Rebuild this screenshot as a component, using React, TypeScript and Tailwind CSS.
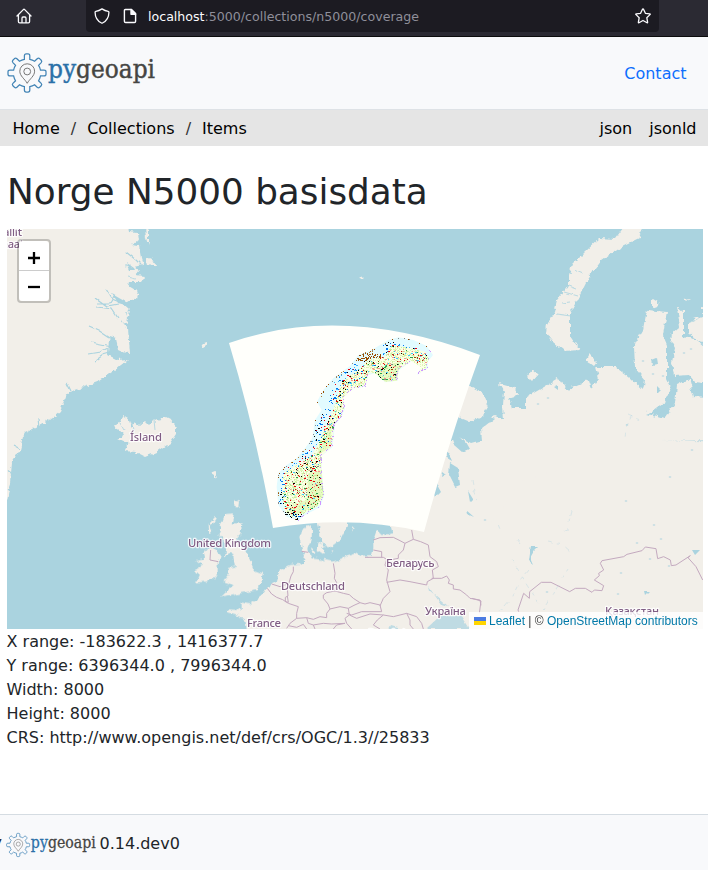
import React from "react";

type Point = [number, number];

// Outline of the Norwegian sea buffer, in thirds of a pixel from (225, 310).
const BUFFER: Point[] = [
  [160, 490], [185, 465], [215, 445], [240, 415], [262, 385], [270, 330], [290, 300], [276, 275], [295, 240], [325, 205],
  [375, 168], [400, 135], [440, 120], [490, 90], [520, 82], [565, 90], [605, 108], [624, 135], [608, 155],
  [608, 175], [575, 195], [590, 172], [560, 152], [520, 182], [518, 212], [480, 217], [450, 190], [430, 195],
  [422, 230], [385, 235], [355, 262], [360, 295], [350, 320], [330, 345], [322, 412], [290, 437], [292, 515],
  [298, 555], [285, 592], [240, 615], [220, 632], [185, 620], [160, 585], [155, 530],
];
const LAND: Point[] = [
  [175, 490], [210, 468], [262, 435], [285, 390], [300, 350], [325, 300], [340, 250], [350, 215], [400, 180],
  [430, 150], [480, 140], [500, 105], [530, 110], [560, 115], [600, 125], [612, 145], [600, 180], [578, 192],
  [588, 172], [557, 152], [520, 180], [516, 212], [480, 215], [450, 190], [430, 190], [422, 228], [385, 235],
  [357, 262], [358, 295], [348, 320], [328, 345], [320, 410], [290, 437], [290, 515], [296, 555],
  [283, 585], [240, 610], [210, 625], [180, 605], [172, 560],
];

const inside = (x: number, y: number, poly: Point[]) => {
  let hit = false;
  for (let i = 0, j = poly.length - 1; i < poly.length; j = i++) {
    const [xi, yi] = poly[i];
    const [xj, yj] = poly[j];
    if (yi > y !== yj > y && x < ((xj - xi) * (y - yi)) / (yj - yi) + xi) hit = !hit;
  }
  return hit;
};

const buildDots = () => {
  let seed = 48271;
  const rnd = () => {
    seed = (seed * 16807) % 2147483647;
    return seed / 2147483647;
  };
  const paths: Record<string, string> = {};
  const put = (color: string, x: number, y: number, w = 1) => {
    paths[color] = (paths[color] || "") + `M${x} ${y}h${w}v1h-${w}z`;
  };
  const pick = (list: string[]) => list[Math.floor(rnd() * list.length)];
  const inner = ["#000", "#e8000b", "#e8000b", "#2ca04a", "#2ca04a", "#f49a8c", "#f49a8c", "#994c00", "#e8000b", "#888", "#3cc8ff"];
  const coast = ["#0078f0", "#0078f0", "#3cb8ff", "#0078f0", "#e8000b", "#000"];
  for (let y = 336; y < 523; y++) {
    for (let x = 275; x < 434; x++) {
      const px = (x + 0.5 - 225) * 3;
      const py = (y + 0.5 - 310) * 3;
      if (!inside(px, py, BUFFER)) continue;
      const r = rnd();
      const edge = !inside(px - 4, py - 4, BUFFER) || !inside(px - 4, py, BUFFER);
      const east = !inside(px + 5, py + 3, BUFFER);
      const south = py > 605;
      const w = rnd() < 0.25 ? 2 : 1;
      if (inside(px, py, LAND)) {
        const nearCoast = !inside(px - 22, py - 16, LAND);
        if (south && r < 0.25) put(pick(["#000", "#000", "#0078f0", "#e8000b"]), x, y, w);
        else if (east && r < 0.28) put("#cc99ff", x, y);
        else if (r < 0.145) put(nearCoast ? pick([...coast, ...inner]) : pick(inner), x, y, w);
        else if (r < 0.38) put("#dff7b8", x, y);
        else if (r < 0.46) put("#c8efa0", x, y);
      } else if (edge && r < 0.11) put(pick(["#bb8038", "#888", "#994c00"]), x, y);
      else if (east && r < 0.25) put("#cc99ff", x, y);
      else if (south && r < 0.25) put("#000", x, y, w);
      else if (px > 395 && px < 470 && py > 130 && py < 153 && r < 0.36) put("#994c00", x, y);
      else if (inside(px + 20, py + 12, LAND) && r < 0.11) put(pick(coast), x, y, w);
    }
  }
  return Object.entries(paths);
};
const DOTS = buildDots();
const pts = (p: Point[]) => p.map((q) => q.join(",")).join(" ");

const PygeoapiLogo = ({ className }: { className: string }) => (
  <svg viewBox="0 0 150 42" className={className}>
    <path
      d="M17.4 6.8V3.2Q17.4 1.2 19.2 1.2H21Q22.8 1.2 22.8 3.2V6.8Q25.5 7.4 27.6 8.7L30.2 6.1Q31.4 5 32.6 6L34.2 7.6Q35.3 8.8 34.2 10L31.6 12.7Q33 14.8 33.5 17.5H37Q39 17.5 39 19.2V21.6Q39 23.3 37 23.3H33.5Q32.9 26 31.6 28.2L34.2 30.8Q35.3 32 34.2 33.2L32.6 34.7Q31.4 35.7 30.2 34.6L27.6 32.1Q25.4 33.5 22.8 34V37.5Q22.8 39.5 21 39.5H19.2Q17.4 39.5 17.4 37.5V34Q14.7 33.5 12.5 32.1L9.9 34.6Q8.7 35.7 7.5 34.7L5.9 33.2Q4.8 32 5.9 30.8L8.5 28.2Q7.2 26 6.6 23.3H3Q1 23.3 1 21.6V19.2Q1 17.5 3 17.5H6.6Q7.1 14.8 8.5 12.7L5.9 10Q4.8 8.8 5.9 7.6L7.5 6Q8.7 5 9.9 6.1L12.5 8.7Q14.7 7.4 17.4 6.8Z"
      fill="none" stroke="#4385b6" strokeWidth="1.25" transform="translate(0 .6)"
    />
    <path d="M20.2 31.3C17.8 27 12.8 24 12.8 19.2A7.4 7.4 0 0 1 27.6 19.2C27.6 24 22.6 27 20.2 31.3Z" fill="none" stroke="#777" strokeWidth="1" />
    <circle cx="20.2" cy="19.5" r="3.4" fill="none" stroke="#777" strokeWidth="1" />
    <text x="41" y="26.2" textLength="107" lengthAdjust="spacingAndGlyphs" fontSize="26" strokeWidth=".45" className="font-['DejaVu_Serif',serif]">
      <tspan fill="#2b70a8" stroke="#2b70a8">py</tspan><tspan fill="#454543" stroke="#454543">geoapi</tspan>
    </text>
  </svg>
);

const Label = ({ x, y, w, children }: { x: number; y: number; w: number; children: string }) => (
  <text
    x={x} y={y} textLength={w} fontSize="11.3" fill="#805d84" stroke="#fff" strokeOpacity=".8" strokeWidth="2.4" strokeLinejoin="round"
    className="font-['Noto_Sans',sans-serif] font-medium [paint-order:stroke]"
  >
    {children}
  </text>
);

const MapDrawing = () => (
  <svg viewBox="7 229 696 400" className="block h-full w-full">
    <defs>
      <filter id="coast" filterUnits="userSpaceOnUse" x="-10" y="210" width="740" height="440">
        <feTurbulence type="fractalNoise" baseFrequency=".17" numOctaves="3" seed="7" />
        <feDisplacementMap in="SourceGraphic" scale="6" xChannelSelector="R" yChannelSelector="G" />
      </filter>
      <filter id="river" filterUnits="userSpaceOnUse" x="-10" y="210" width="740" height="440">
        <feTurbulence type="fractalNoise" baseFrequency=".12" numOctaves="2" seed="3" />
        <feDisplacementMap in="SourceGraphic" scale="4" xChannelSelector="R" yChannelSelector="G" />
      </filter>
    </defs>
    <rect x="7" y="229" width="696" height="400" fill="#aad3df" />
    <g fill="#f2efe9" filter="url(#coast)">
      {/* Greenland */}
      <path d="M-5 215H128L130 232 138 233 139 241 132 245 139 246 141 258 143 264 135 266 140 270 136 275 145 276 141 282 129 282 128 285 138 291 136 298 128 303 120 301 129 309 127 324 121 320 128 329 130 353 118 352 113 340 109 339 108 355 118 360 128 359 113 372 100 381 87 386 71 391 65 398 60 412 50 420 37 427 25 433 23 437 20 450 12 463 10 483 7 500H-5Z" />
      <path d="M145 229 148 231 148 245 146 238ZM146 258 151 257 155 265 147 266Z" />
      {/* Iceland */}
      <path d="M115 428 123 416 128 419 131 427 135 422 139 425 144 421 148 425 154 419 158 421 162 416 170 420 176 428 176 434 170 443 157 452 145 457 135 452 124 451 128 443 117 438 125 434Z" />
      <path d="M201 344 207 342 208 344 203 347ZM211 472 216 470 216 475 214 480 214 474Z" />
      {/* British Isles */}
      <g transform="translate(180 510) scale(.33333)">
        <path d="M135 12 162 10 155 40 188 40 180 75 165 95 190 110 210 150 222 180 248 190 245 215 230 240 180 250 150 258 122 262 150 235 160 225 130 215 150 190 140 175 165 170 160 135 145 130 135 145 140 100 115 75 125 40ZM107 15 90 35 95 45 107 25ZM85 40 94 60 88 68ZM70 120 100 116 122 135 113 160 113 195 80 215 45 218 60 195 45 180 70 165 48 150 75 145Z" />
        <path d="M163-30 180-25 178-10 163-12Z" />
        {/* Mainland Europe */}
        <path d="M205 390 195 325 145 310 140 298 185 300 185 275 215 280 240 262 255 238 290 215 300 180 330 165 370 160 375 140 365 115 358 80 380 45 396 55 395 90 385 115 395 145 430 150 460 155 500 140 530 130 545 140 575 138 580 115 580 90 590 60 605 75 640 70 630 30 750-30 830-150 900-230 1800-200V390Z" />
        <path d="M405 20 430 110 450 112 480 90 500 50 510 20ZM392 112 410 125 400 132ZM415 98 435 103 430 132 413 120ZM520 50 525 48 515 70ZM454 118 460 119 459 124Z" />
      </g>
      {/* Arctic Russia */}
      <path d="M457 390 468 385 482 392 488 407 482 417 470 421 457 417 440 430 420 530 485 530 540 460 590 440 720 440 720 399 694 397 689 379 677 385 675 403 664 419 647 414 652 412 665 402 671 387 667 378 667 345 663 335 667 312 647 310 643 330 634 345 635 368 645 380 643 390 629 377 615 367 596 367 599 378 592 388 589 380 579 385 567 390 559 378 544 387 525 398 525 408 512 408 509 398 519 395 514 387 499 383 504 392 503 405 504 420 494 416 479 428 482 442 470 442 458 435 440 450Z" />
      <path d="M470 441 480 428 490 420 540 420 560 470 450 500 455 440Z" />
      <path d="M629 220H645L639 238 619 248 602 260 589 277 580 295 570 313 570 335 580 350 564 351 554 343 546 333 547 325 554 312 557 300 569 285 569 275 572 265 585 252 600 238 615 239Z" />
      <path d="M532 370 538 375 532 382 527 377ZM589 354 597 362 594 366 586 360ZM652 299 660 304 652 307ZM720 385 695 382 689 375 674 376 672 362 675 348 669 337 680 327 677 307 683 312 683 337 720 346ZM720 320 707 316 689 323 689 333 705 347 720 346ZM693 318 699 316 697 321ZM684 300 690 299 686 302ZM702 308 712 310 702 314Z" />
      <circle cx="361" cy="278" r="1.5" />
    </g>
    {/* Fjords, White Sea and lakes */}
    <g fill="#aad3df" filter="url(#river)">
      <path d="M457 417 472 423 488 415 495 418 481 429 482 440 471 443 456 435 451 432Z" />
      <path d="M450 434 457 433 465 442 469 449 462 452 454 445ZM444 449 449 453 452 461 447 458ZM450 463 458 468 460 485 455 487 449 475ZM436 483 441 492 435 498 431 489ZM468 490 473 498 470 501ZM466 510 474 517 467 514ZM443 471 447 474 442 477Z" />
      <path d="M652 360 657 358 658 364 653 365ZM657 386 661 390 657 394ZM530 546 539 546 534 551 530 558 533 565 528 561ZM645 592 650 592 646 596ZM692 550 700 550 695 555ZM553 386 557 384 557 389Z" />
      <path d="M428 586 441 604 448 606 429 590ZM426 629 440 616 461 616 469 629ZM391 625 398 627 398 630 389 629Z" fillOpacity=".7" />
      <path d="M127 263 134 268 135 270 130 270ZM127 283 135 287 131 288ZM112 293 126 301 129 306 118 303ZM110 336 116 338 118 350 129 355 128 358 112 354Z" />
    </g>
    <g fill="none" stroke="#aad3df" strokeWidth="1.2" filter="url(#river)">
      <path d="M96 298 107 306 118 304M106 289 112 299 127 305M97 307 112 309 118 318M98 303 110 303 114 296M89 326 98 330 110 338M91 342 111 346M88 354 100 352 108 348M95 361 103 355 110 353M126 252 136 260 140 264M66 383 70 391M38 419 39 429M13 445 22 450M8 470 14 474" />
      <path d="M125 266 131 265M128 276 136 278M126 311 128 319M562 303 570 302M564 292 578 296M568 286 576 289M574 269 583 273M556 314 571 316M120 423 124 430M132 424 134 434M154 419 155 429" strokeWidth=".8" />
      <path d="M632 415 626 428 625 440M572 510 567 530 561 532M568 568 543 610 512 560M548 541 562 544 571 552M498 525 501 533M473 490 478 502M473 480 475 492M517 540 520 544M528 570 520 580 510 600 500 612M665 411 655 415 646 411M628 415 640 420" strokeWidth=".9" strokeOpacity=".4" strokeDasharray="5 4 3 7" />
    </g>
    <g fill="#aad3df" fillOpacity=".75">
      {[[691, 349], [684, 353], [653, 374], [663, 376], [627, 425], [548, 398], [538, 404], [670, 477], [626, 501], [654, 525], [661, 539], [637, 543], [650, 559], [669, 566], [621, 573], [547, 592], [618, 594], [485, 520], [496, 412], [643, 361], [692, 450]].map(([x, y]) => (
        <ellipse key={`${x}-${y}`} cx={x} cy={y} rx="1.3" ry=".8" />
      ))}
    </g>
    {/* National borders */}
    <g fill="none" stroke="#c3a9bf" strokeLinejoin="round">
      <g transform="translate(180 510) scale(.33333)" strokeWidth="3">
        <path d="M92 120 90 150 115 155M262 235 275 252 290 262 308 269 325 280 355 290 350 310 350 325 330 340 320 355M275 222 300 230 322 222M340 170 340 185 333 198 322 235 324 258 316 262 316 275 325 277 322 258M365 124 385 127M460 160 465 190 463 205 470 218 465 240M430 255 440 248 465 243 490 250 508 254 520 265 540 278 522 286 505 295 480 290 450 297 444 282 430 265Z" />
        <path d="M450 297 440 310 440 323 420 320 400 328 380 323 350 325M380 323 385 340 400 345 430 340 455 342 495 340M405 357 400 345M325 347 350 352 370 343 380 357M540 278 555 282 570 278 600 285 605 305 570 305 545 305 515 315 500 310M600 288 610 265 630 245 620 210 625 180 615 165 620 148 610 142 555 142M580 120 605 125 605 142M580 90 600 83 640 82 660 92 675 100 700 88 695 60M675 100 670 120 655 135 655 145 630 150" />
        <path d="M700 88 722 95 745 105 750 140 770 155 775 170 757 180 760 205 742 215 740 225 690 215 660 210 620 217M755 205 785 205 800 198 808 210 805 220 820 225 820 237 840 240 860 255 870 265 900 270 903 286M505 295 508 315 495 325 500 340 515 357M508 315 530 325 570 312 610 315 592 330 580 345 600 357M610 315 640 320 680 310 710 320 725 340 730 357M680 310 690 330 690 345 700 357M495 340 470 345 460 357" />
      </g>
      <g transform="translate(472 420) scale(.33333)" strokeWidth="3">
        <path d="M0 535 27 543 22 580M140 575 138 570 155 520 172 535 173 515 208 487 237 487 293 515 310 505 340 505 360 517 367 510 390 512 395 497 367 480 382 467 380 460 395 450 385 430 390 422 455 410 465 403 510 392 520 381 552 386 557 416 575 410 595 420 598 437 612 435 655 407 648 413 672 440 692 480" />
      </g>
    </g>
    {/* Coverage image */}
    <path d="M229 343Q342 303 480 355Q448 443 424 532Q350 515 273 528Q256 433 229 343Z" fill="#fffffb" />
    <g transform="translate(225 310) scale(.33333)">
      <polygon points={pts(BUFFER)} fill="#e2fbff" />
      <polygon points={pts(LAND)} fill="#fbffe6" />
      <path d="M455 185 480 165 525 155 516 212 480 215ZM320 330 318 410 270 440 300 385ZM250 490 290 480 296 555 270 590 200 620 190 590 245 570Z" fill="#dff8b4" fillOpacity=".7" />
    </g>
    <g shapeRendering="crispEdges">
      {DOTS.map(([color, d]) => (
        <path key={color} d={d} fill={color} />
      ))}
    </g>
    <Label x={-13} y={236} w={35}>Kalallit</Label>
    <Label x={-14} y={248} w={38}>Nunaat</Label>
    <Label x={130} y={441} w={32}>Ísland</Label>
    <Label x={188} y={547} w={83}>United Kingdom</Label>
    <Label x={281} y={590} w={64}>Deutschland</Label>
    <Label x={247} y={627} w={34}>France</Label>
    <Label x={386} y={567} w={48.5}>Беларусь</Label>
    <Label x={425} y={615} w={41}>Україна</Label>
    <Label x={605} y={615} w={54}>Қазақстан</Label>
    <Label x={368} y={636.5} w={43}>România</Label>
  </svg>
);

export default function App() {
  return (
    <div className="h-[870px] w-[708px] overflow-hidden bg-white font-['DejaVu_Sans',sans-serif] text-base leading-6 text-[#212529]">
      <div className="flex h-[37px] items-start border-b border-[#0c0c0d] bg-[#2b2a33]">
        <div className="flex h-8 w-[86px] items-center pl-4">
          <svg viewBox="0 0 16 16" className="size-4" fill="none" stroke="#fbfbfe" strokeWidth="1.3" strokeLinejoin="round" strokeLinecap="round">
            <path d="M1 8 7.3 1.6Q8 .9 8.7 1.6L15 8M2.4 7V13.6Q2.4 14.8 3.6 14.8H12.4Q13.6 14.8 13.6 13.6V7M6 14.5V10.2Q6 9 7 9H9Q10 9 10 10.2V14.5" />
          </svg>
        </div>
        <div className="flex h-8 w-[573px] items-center rounded-b bg-[#1c1b22] pr-2 pl-2">
          <svg viewBox="0 0 16 16" className="size-4" fill="none" stroke="#fbfbfe" strokeWidth="1.3" strokeLinejoin="round">
            <path d="M8 .9Q11 3 14.2 3.3Q15 3.4 14.9 4.4Q14.8 11.7 8.5 15Q8 15.3 7.5 15Q1.2 11.7 1.1 4.4Q1 3.4 1.8 3.3Q5 3 8 .9Z" />
          </svg>
          <svg viewBox="0 0 16 16" className="ml-3 size-4" fill="none" stroke="#fbfbfe" strokeWidth="1.4" strokeLinejoin="round">
            <path d="M3.4 1.5H9.5L13.6 5.6V13.2Q13.6 14.5 12.4 14.5H3.6Q2.4 14.5 2.4 13.2V2.7Q2.4 1.5 3.4 1.5Z" />
            <path d="M9 1.5V6.2H13.6Z" fill="#fbfbfe" />
          </svg>
          <div className="ml-2.5 w-[487px] pt-0.5 text-[12.6px] leading-5 text-[#8f8f9a]">
            <span className="text-[#fbfbfe]">localhost</span>:5000/collections/n5000/coverage
          </div>
          <svg viewBox="0 0 16 16" className="size-4 shrink-0" fill="none" stroke="#fbfbfe" strokeWidth="1.3" strokeLinejoin="round">
            <path d="M7.5 1.2Q8 .4 8.5 1.2L10.4 5.3 14.8 5.8Q15.6 6 15 6.6L11.8 9.7 12.6 14.2Q12.7 15 12 14.7L8 12.5 4 14.7Q3.3 15 3.4 14.2L4.2 9.7 1 6.6Q.4 6 1.2 5.8L5.6 5.3Z" />
          </svg>
        </div>
      </div>
      <header className="flex h-[73px] items-center justify-between border-b border-[#dee2e6] bg-[#f8f9fb] pr-[21.5px] pl-[7px]">
        <PygeoapiLogo className="h-[42px] w-[150px]" />
        <a className="pt-0.5 text-[#0d6efd]">Contact</a>
      </header>
      <nav className="flex h-9 items-center justify-between bg-[#e5e5e5] pt-0.5 pr-[11.5px] pl-[12.5px] text-black">
        <div className="flex gap-[11px]">
          <span>Home</span>
          <span className="text-[#333]">/</span>
          <span>Collections</span>
          <span className="text-[#333]">/</span>
          <span>Items</span>
        </div>
        <div className="flex gap-[17px]">
          <span>json</span>
          <span>jsonld</span>
        </div>
      </nav>
      <main className="h-[668px] pr-[5px] pl-[7px]">
        <h1 className="h-[83px] pt-6 text-[35.8px] leading-[43px]">Norge N5000 basisdata</h1>
        <div className="relative h-[400px] w-[696px] overflow-hidden">
          <MapDrawing />
          <div className="absolute top-2.5 left-2.5 w-[34px] rounded border-2 border-black/20 bg-clip-padding text-black">
            <div className="flex h-[30px] items-center justify-center rounded-t-sm border-b border-[#ccc] bg-white pt-1">
              <svg viewBox="0 0 12 12" className="size-3"><path d="M0 6H12M6 0V12" stroke="#000" strokeWidth="2.3" /></svg>
            </div>
            <div className="flex h-[30px] items-center justify-center rounded-b-sm bg-white pt-0.5">
              <svg viewBox="0 0 12 12" className="size-3"><path d="M0 6H12" stroke="#000" strokeWidth="2.3" /></svg>
            </div>
          </div>
          <div className="absolute right-0 bottom-0 flex h-[17px] w-[234px] items-center bg-white/80 pl-[5px] font-['Liberation_Sans',sans-serif] text-xs leading-4 whitespace-pre text-[#333]">
            <svg viewBox="0 0 12 8" className="mr-[3px] h-2 w-3"><path fill="#4C7BE1" d="M0 0h12v4H0z" /><path fill="#FFD500" d="M0 4h12v4H0z" /></svg>
            <span className="text-[#0078a8]">Leaflet</span>
            <span> | © </span>
            <span className="text-[#0078a8]">OpenStreetMap contributors</span>
          </div>
        </div>
        <div className="-ml-[.5px] pt-px">
          <div>X range: -183622.3 , 1416377.7</div>
          <div>Y range: 6396344.0 , 7996344.0</div>
          <div>Width: 8000</div>
          <div>Height: 8000</div>
          <div>CRS: http://www.opengis.net/def/crs/OGC/1.3//25833</div>
        </div>
      </main>
      <footer className="flex h-14 items-center border-t border-[#d5dce2] bg-[#f8f9fb]">
        <div className="flex w-1.5 shrink-0 justify-end overflow-hidden pr-1">y</div>
        <PygeoapiLogo className="mt-1 h-[26px] w-[91px]" />
        <span className="ml-[2.5px] pt-0.5">0.14.dev0</span>
      </footer>
    </div>
  );
}
